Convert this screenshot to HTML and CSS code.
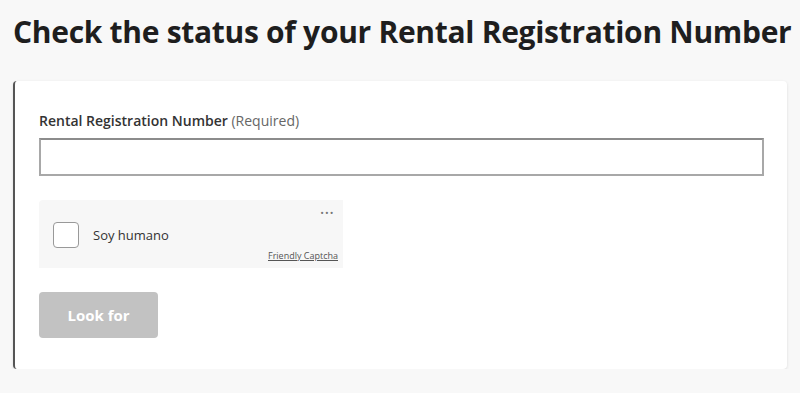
FILE: index.html
```html
<!DOCTYPE html>
<html lang="en">
  <head>
    <meta charset="UTF-8" />
    <meta name="viewport" content="width=device-width, initial-scale=1.0" />
    <title>Rental Registration Status</title>
    <link rel="stylesheet" href="styles.css">
  </head>
  <body>
    <h1 class="page-title">Check the status of your Rental Registration Number</h1>

    <div class="card">
      <label for="rrn" class="field-label">Rental Registration Number <span class="req">(Required)</span></label>
      <input type="text" id="rrn" class="field-input" />

      <!-- captcha widget -->
      <div class="captcha">
        <span class="captcha-dots">&middot;&middot;&middot;</span>
        <div class="captcha-row">
          <span class="captcha-box"></span>
          <span class="captcha-text">Soy humano</span>
        </div>
        <a class="captcha-brand" href="#">Friendly Captcha</a>
      </div>

      <button class="look-btn" disabled>Look for</button>
    </div>
  </body>
</html>
```

FILE: styles.css
```css
html {
  height: 100%;
}

body {
  margin: 0;
  padding: 0 13px;
  background-color: #f8f8f8;
  font-family: "Open Sans", "Noto Sans", Arial, sans-serif;
  color: #222;
}

.page-title {
  margin: 0;
  padding-top: 14px;
  font-size: 30px;
  font-weight: 700;
  line-height: 36px;
  color: #1e1e1e;
  white-space: nowrap;
  letter-spacing: -0.3px;
}

.card {
  margin-top: 31px;
  width: 774px;
  box-sizing: border-box;
  padding: 30px 24px 31px 24px;
  background: #fff;
  border-left: 2px solid #555;
  border-radius: 4px;
  box-shadow: 0 1px 3px rgba(0, 0, 0, 0.12);
}

.field-label {
  display: block;
  font-size: 14px;
  font-weight: 600;
  color: #333;
  margin-bottom: 8px;
}

.req {
  font-weight: 400;
  color: #666;
}

.field-input {
  display: block;
  width: 725px;
  height: 38px;
  box-sizing: border-box;
  border: 2px solid #a8a8a8;
  border-top-color: #8c8c8c;
  margin: 0;
}

.captcha {
  position: relative;
  margin-top: 24px;
  width: 304px;
  height: 68px;
  box-sizing: border-box;
  background: #f7f7f7;
  border-radius: 4px 0 0 0;
  padding: 22px 14px 0 14px;
}

.captcha-dots {
  position: absolute;
  top: 2px;
  right: 9px;
  font-size: 18px;
  line-height: 20px;
  color: #777;
}

.captcha-row {
  display: flex;
  align-items: center;
  gap: 14px;
}

.captcha-box {
  width: 24px;
  height: 24px;
  border: 1px solid #999;
  border-radius: 4px;
  background: #fff;
}

.captcha-text {
  font-size: 13px;
  color: #333;
}

.captcha-brand {
  position: absolute;
  right: 5px;
  bottom: 6px;
  font-size: 9px;
  color: #555;
}

.look-btn {
  display: block;
  margin-top: 24px;
  width: 119px;
  height: 46px;
  border: none;
  border-radius: 4px;
  background-color: #c2c2c2;
  color: #fff;
  font-family: inherit;
  font-size: 15px;
  font-weight: 700;
}
```
